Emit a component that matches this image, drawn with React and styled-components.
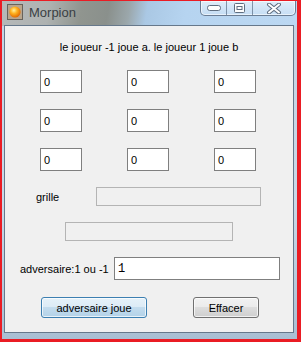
import React from 'react';
import styled, { createGlobalStyle } from 'styled-components';

const GlobalStyle = createGlobalStyle`
  html, body {
    margin: 0;
    padding: 0;
    background: #ffffff;
  }
  body {
    font-family: "Liberation Sans", Arial, sans-serif;
  }
`;

const Frame = styled.div`
  width: 301px;
  height: 342px;
  box-sizing: border-box;
  border-style: solid;
  border-color: #ea1c24;
  border-width: 1px 4px 3px 2px;
`;

const Window = styled.div`
  height: 100%;
  box-sizing: border-box;
  display: flex;
  flex-direction: column;
  padding: 0 3px 6px 2px;
  background:
    linear-gradient(100deg, #b6b9b9 0%, #aeb2b1 16%, #90958f 27%, #8a908c 36%, #9ba7ab 43%, #aac8e4 49%, #b6d4f0 62%, #bcd8f2 100%) top / 100% 25px no-repeat,
    linear-gradient(180deg, #c3d3e2 0%, #c9d9e8 60%, #a9bfd3 100%);
`;

const TitleBar = styled.div`
  height: 24px;
  display: flex;
  align-items: flex-start;
  flex-shrink: 0;
`;

const AppIcon = styled.div`
  width: 16px;
  height: 16px;
  margin: 3px 0 0 3px;
  box-sizing: border-box;
  border: 1px solid rgba(70, 70, 70, 0.7);
  background: #b9a58c;
  display: flex;
  align-items: center;
  justify-content: center;
`;

const Title = styled.span`
  margin: 4px 0 0 6px;
  font-size: 13px;
  line-height: 16px;
  color: #3a3f44;
`;

const Caption = styled.div`
  margin-left: auto;
  margin-right: -2px;
  display: flex;
  height: 15px;
  box-sizing: border-box;
  border: 1px solid rgba(70, 90, 115, 0.75);
  border-top: none;
  border-radius: 0 0 5px 5px;
  overflow: hidden;
  background: linear-gradient(180deg, rgba(255, 255, 255, 0.55), rgba(220, 235, 250, 0.35));
  box-shadow: inset 0 0 0 1px rgba(255, 255, 255, 0.6);
`;

const CaptionButton = styled.div`
  width: ${(p) => p.w}px;
  display: flex;
  align-items: center;
  justify-content: center;
  & + & {
    border-left: 1px solid rgba(70, 90, 115, 0.6);
  }
`;

const Client = styled.div`
  flex: 1;
  display: flex;
  flex-direction: column;
  align-items: flex-start;
  background: #f0f0f0;
  border: 1px solid #66788b;
  font-size: 11px;
  color: #000;
`;

const Heading = styled.div`
  align-self: stretch;
  text-align: center;
  margin-top: 14px;
  line-height: 14px;
`;

const Board = styled.div`
  display: grid;
  grid-template-columns: repeat(3, 42px);
  column-gap: 45px;
  row-gap: 16px;
  margin: 16px 0 0 35px;
`;

const TextBox = styled.div`
  box-sizing: border-box;
  width: ${(p) => p.w || 42}px;
  height: ${(p) => p.h || 23}px;
  border: 1px solid ${(p) => (p.disabled ? '#b4b4b4' : '#7f7f7f')};
  background: ${(p) => (p.disabled ? '#f0f0f0' : '#ffffff')};
  padding: 0 3px;
  display: flex;
  align-items: center;
  font-size: 11px;
`;

const Row = styled.div`
  display: flex;
  align-items: center;
  margin: ${(p) => p.m};
`;

const Label = styled.span`
  width: ${(p) => p.w}px;
  line-height: 14px;
`;

const EntryText = styled.span`
  font-family: "Liberation Mono", "DejaVu Sans Mono", monospace;
  font-size: 12px;
`;

const Button = styled.div`
  box-sizing: border-box;
  width: ${(p) => p.w}px;
  height: 21px;
  margin-left: ${(p) => p.ml}px;
  border-radius: 3px;
  display: flex;
  align-items: center;
  justify-content: center;
  font-size: 11px;
  border: 1px solid ${(p) => (p.primary ? '#3c7fb1' : '#707070')};
  background: ${(p) =>
    p.primary
      ? 'linear-gradient(180deg, #e5f1f9 0%, #dcebf6 49%, #c3dcee 50%, #b3d2e8 100%)'
      : 'linear-gradient(180deg, #f2f2f2 0%, #ebebeb 49%, #dddddd 50%, #cfcfcf 100%)'};
  box-shadow: inset 0 0 0 1px rgba(255, 255, 255, 0.7);
`;

const cells = Array.from({ length: 9 }, () => '0');

const App = () => (
  <>
    <GlobalStyle />
    <Frame>
      <Window>
        <TitleBar>
          <AppIcon>
            <svg width="12" height="12" viewBox="0 0 12 12">
              <defs>
                <radialGradient id="orb" cx="40%" cy="35%" r="65%">
                  <stop offset="0%" stopColor="#fff2a0" />
                  <stop offset="45%" stopColor="#ffb220" />
                  <stop offset="100%" stopColor="#e26a00" />
                </radialGradient>
              </defs>
              <circle cx="6" cy="6" r="5.6" fill="url(#orb)" />
            </svg>
          </AppIcon>
          <Title>Morpion</Title>
          <Caption>
            <CaptionButton w={25}>
              <svg width="14" height="7" viewBox="0 0 14 7">
                <rect x="0.5" y="0.5" width="13" height="5" rx="2.2" fill="#fdfdfd" stroke="#5f6e80" />
              </svg>
            </CaptionButton>
            <CaptionButton w={25}>
              <svg width="11" height="10" viewBox="0 0 11 10">
                <rect x="0.5" y="0.5" width="10" height="9" rx="1" fill="#fdfdfd" stroke="#5f6e80" />
                <rect x="3" y="3.5" width="5" height="3" fill="#ffffff" stroke="#5f6e80" />
              </svg>
            </CaptionButton>
            <CaptionButton w={42}>
              <svg width="16" height="11" viewBox="0 0 16 11">
                <path d="M3 1.5 L13 9.5 M13 1.5 L3 9.5" stroke="#5f6e80" strokeWidth="4" strokeLinecap="round" />
                <path d="M3 1.5 L13 9.5 M13 1.5 L3 9.5" stroke="#ffffff" strokeWidth="2" strokeLinecap="round" />
              </svg>
            </CaptionButton>
          </Caption>
        </TitleBar>
        <Client>
          <Heading>le joueur -1 joue a. le joueur 1 joue b</Heading>
          <Board>
            {cells.map((v, i) => (
              <TextBox key={i}>{v}</TextBox>
            ))}
          </Board>
          <Row m="16px 0 0 31px">
            <Label w={60}>grille</Label>
            <TextBox disabled w={165} h={19} />
          </Row>
          <Row m="16px 0 0 60px">
            <TextBox disabled w={168} h={19} />
          </Row>
          <Row m="16px 0 0 15px">
            <Label w={94}>adversaire:1 ou -1</Label>
            <TextBox w={166} h={23}>
              <EntryText>1</EntryText>
            </TextBox>
          </Row>
          <Row m="17px 0 0 0">
            <Button primary w={106} ml={36}>adversaire joue</Button>
            <Button w={66} ml={46}>Effacer</Button>
          </Row>
        </Client>
      </Window>
    </Frame>
  </>
);

export default App;
